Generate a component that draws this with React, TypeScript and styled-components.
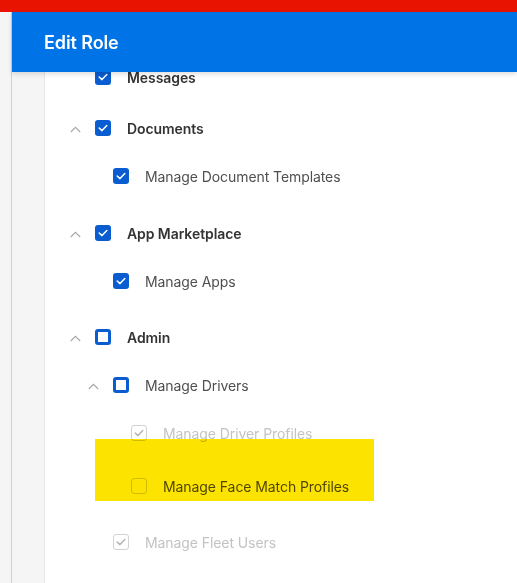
import React from 'react';
import styled, { createGlobalStyle } from 'styled-components';

const GlobalStyle = createGlobalStyle`
  html, body {
    margin: 0;
    padding: 0;
    background: #ffffff;
    font-family: Inter, "Noto Sans", "Liberation Sans", sans-serif;
  }
`;

const Page = styled.div`
  display: flex;
  flex-direction: column;
  height: 100vh;
  overflow: hidden;
`;

const AlertBar = styled.div`
  height: 12px;
  flex-shrink: 0;
  background-color: #e81300;
`;

const Main = styled.div`
  display: flex;
  flex: 1;
  min-height: 0;
`;

const LeftRail = styled.div`
  width: 11px;
  flex-shrink: 0;
  background-color: #f5f5f5;
  border-right: 1px solid #cfcfcf;
`;

const Panel = styled.div`
  flex: 1;
  display: flex;
  flex-direction: column;
  min-width: 0;
`;

const Header = styled.div`
  position: relative;
  z-index: 2;
  height: 60px;
  flex-shrink: 0;
  display: flex;
  align-items: center;
  padding-left: 32px;
  background-color: #0073e6;
  box-shadow: 0 2px 5px rgba(0, 0, 0, 0.14);
`;

const Title = styled.h2`
  margin: 0;
  color: #ffffff;
  font-size: 18px;
  font-weight: 600;
  letter-spacing: -0.1px;
`;

const Body = styled.div`
  flex: 1;
  display: flex;
  min-height: 0;
  overflow: hidden;
`;

const Gutter = styled.div`
  width: 32px;
  flex-shrink: 0;
  background-color: #f5f5f5;
  border-right: 1px solid #e6e6e6;
`;

const List = styled.div`
  flex: 1;
  display: flex;
  flex-direction: column;
  margin-top: -19px;
`;

const Row = styled.div<{ $level: number; $space: number }>`
  position: relative;
  display: flex;
  align-items: center;
  height: 48px;
  flex-shrink: 0;
  margin-top: ${p => p.$space}px;
  padding-left: ${p => 20 + p.$level * 18}px;
`;

const Chevron = styled.span`
  width: 20px;
  height: 16px;
  margin-right: 10px;
  display: flex;
  align-items: center;
  justify-content: center;
  padding-top: 3px;
  box-sizing: border-box;
`;

const Box = styled.span<{ $state: 'checked' | 'empty' | 'muted' | 'blank' }>`
  width: 16px;
  height: 16px;
  box-sizing: border-box;
  flex-shrink: 0;
  border-radius: 3px;
  display: flex;
  align-items: center;
  justify-content: center;
  margin-right: 16px;
  background-color: ${p => (p.$state === 'checked' ? '#0a5dd1' : '#ffffff')};
  border: ${p =>
    p.$state === 'checked'
      ? 'none'
      : p.$state === 'empty'
      ? '3px solid #0a5dd1'
      : '1px solid #d2d2d2'};
`;

const Label = styled.span<{ $bold?: boolean; $muted?: boolean }>`
  font-size: 14px;
  letter-spacing: -0.08px;
  font-weight: ${p => (p.$bold ? 600 : 400)};
  color: ${p => (p.$muted ? '#c3c3c3' : p.$bold ? '#333333' : '#4f4f4f')};
  white-space: nowrap;
`;

const Highlight = styled.div`
  position: absolute;
  left: 50px;
  top: -23px;
  width: 279px;
  height: 62px;
  background-color: #fde400;
  mix-blend-mode: multiply;
  pointer-events: none;
`;

type State = 'checked' | 'empty' | 'muted' | 'blank';

interface Item {
  label: string;
  level: number;
  state: State;
  chevron?: boolean;
  bold?: boolean;
  space: number;
  marked?: boolean;
}

const items: Item[] = [
  { label: 'Messages', level: 0, state: 'checked', bold: true, space: 0 },
  { label: 'Documents', level: 0, state: 'checked', chevron: true, bold: true, space: 3 },
  { label: 'Manage Document Templates', level: 1, state: 'checked', space: 0 },
  { label: 'App Marketplace', level: 0, state: 'checked', chevron: true, bold: true, space: 9 },
  { label: 'Manage Apps', level: 1, state: 'checked', space: 0 },
  { label: 'Admin', level: 0, state: 'empty', chevron: true, bold: true, space: 8 },
  { label: 'Manage Drivers', level: 1, state: 'empty', chevron: true, space: 0 },
  { label: 'Manage Driver Profiles', level: 2, state: 'muted', space: 0 },
  { label: 'Manage Face Match Profiles', level: 2, state: 'blank', space: 5, marked: true },
  { label: 'Manage Fleet Users', level: 1, state: 'muted', space: 8 },
];

const CheckMark: React.FC<{ color: string }> = ({ color }) => (
  <svg width="10" height="8" viewBox="0 0 10 8">
    <polyline points="1.2,4 4,6.6 8.8,1.6" fill="none" stroke={color} strokeWidth="1.5" strokeLinecap="round" strokeLinejoin="round" />
  </svg>
);

const Caret = () => (
  <svg width="11" height="7" viewBox="0 0 11 7">
    <polyline points="0.8,6 5.5,1.3 10.2,6" fill="none" stroke="#a8a8a8" strokeWidth="1.1" />
  </svg>
);

const App: React.FC = () => {
  return (
    <Page>
      <GlobalStyle />
      <AlertBar />
      <Main>
        <LeftRail />
        <Panel>
          <Header>
            <Title>Edit Role</Title>
          </Header>
          <Body>
            <Gutter />
            <List>
              {items.map(item => (
                <Row key={item.label} $level={item.level} $space={item.space}>
                  <Chevron>{item.chevron && <Caret />}</Chevron>
                  <Box $state={item.state}>
                    {item.state === 'checked' && <CheckMark color="#ffffff" />}
                    {item.state === 'muted' && <CheckMark color="#b4b4b4" />}
                  </Box>
                  <Label $bold={item.bold} $muted={item.state === 'muted'}>
                    {item.label}
                  </Label>
                  {item.marked && <Highlight />}
                </Row>
              ))}
            </List>
          </Body>
        </Panel>
      </Main>
    </Page>
  );
};

export default App;
